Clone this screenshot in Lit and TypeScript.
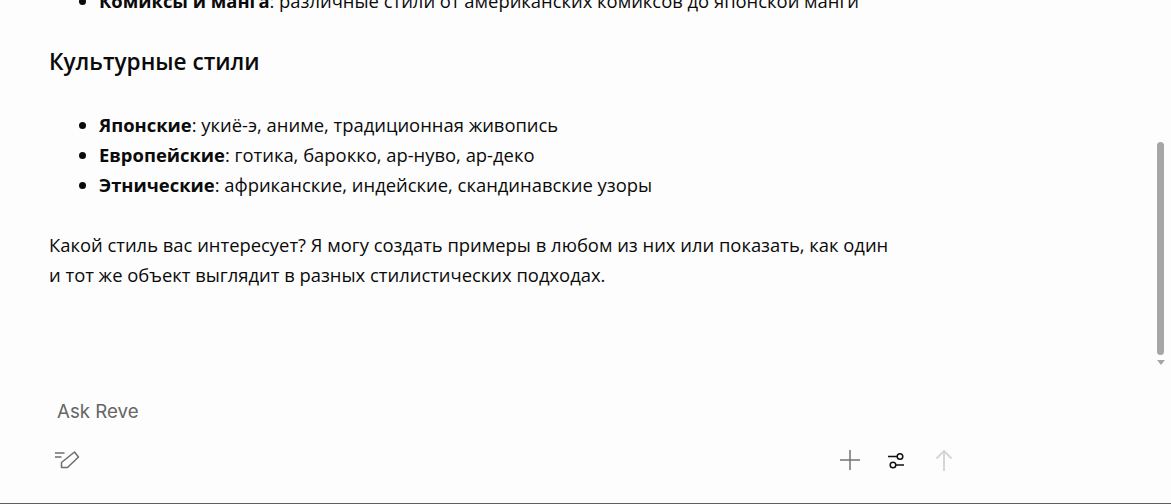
import { LitElement, html, css } from "lit";
import { customElement } from "lit/decorators.js";

@customElement("app-root")
export class AppRoot extends LitElement {
  static styles = css`
    :host {
      display: flex;
      flex-direction: column;
      width: 1171px;
      height: 504px;
      background: #fdfdfd;
      color: #0a0a0a;
      font-family: "Open Sans", "Noto Sans", sans-serif;
      overflow: hidden;
      box-sizing: border-box;
      border-bottom: 1px solid #5f5f5f;
    }
    .main {
      position: relative;
      height: 382px;
      overflow: hidden;
      flex: none;
    }
    .content {
      width: 843px;
      margin: -14px 0 0 49px;
      font-size: 18.4px;
      line-height: 30px;
    }
    ul {
      margin: 0;
      padding: 0 0 0 50px;
    }
    h3 {
      margin: 31px 0 33px;
      font-size: 22.6px;
      line-height: 30px;
      font-weight: 550;
    }
    p {
      margin: 30px 0 0;
    }
    b {
      font-weight: 700;
    }
    .track {
      position: absolute;
      right: 7px;
      top: 142px;
      width: 7px;
      height: 213px;
      border-radius: 4px;
      background: #a6a6a6;
    }
    .arrow {
      position: absolute;
      right: 6px;
      top: 360px;
      width: 0;
      height: 0;
      border-left: 4.5px solid transparent;
      border-right: 4.5px solid transparent;
      border-top: 5px solid #a6a6a6;
    }
    .composer {
      flex: 1;
      width: 955px;
      padding: 18px 0 0 57px;
      box-sizing: border-box;
      display: flex;
      flex-direction: column;
    }
    .ask {
      font-family: Inter, sans-serif;
      font-size: 18.7px;
      font-weight: 400;
      line-height: 23px;
      color: #666;
    }
    .tools {
      display: flex;
      align-items: center;
      margin: 26px 0 0 -2px;
    }
    .tools svg {
      display: block;
      flex: none;
    }
    .spacer {
      flex: 1;
    }
    .right {
      display: flex;
      gap: 24px;
      align-items: center;
    }
  `;

  render() {
    return html`
      <div class="main">
        <div class="content">
          <ul>
            <li><b>Комиксы и манга</b>: различные стили от американских комиксов до японской манги</li>
          </ul>
          <h3>Культурные стили</h3>
          <ul>
            <li><b>Японские</b>: укиё-э, аниме, традиционная живопись</li>
            <li><b>Европейские</b>: готика, барокко, ар-нуво, ар-деко</li>
            <li><b>Этнические</b>: африканские, индейские, скандинавские узоры</li>
          </ul>
          <p>Какой стиль вас интересует? Я могу создать примеры в любом из них или показать, как один и тот же объект выглядит в разных стилистических подходах.</p>
        </div>
        <div class="track"></div>
        <div class="arrow"></div>
      </div>
      <div class="composer">
        <div class="ask">Ask Reve</div>
        <div class="tools">
          <svg width="26" height="22" viewBox="0 0 26 22" fill="none" stroke="#6e6e6e" stroke-width="1.5">
            <path d="M0 4H9.5M0 8H6.5" />
            <path d="M6.5 18.5V13.5L19.5 3L23.5 8L12.5 18.5Z" stroke-linejoin="round" />
          </svg>
          <div class="spacer"></div>
          <div class="right">
            <svg width="22" height="22" viewBox="0 0 22 22" fill="none" stroke="#737373" stroke-width="1.5">
              <path d="M11 1V21M1 11H21" />
            </svg>
            <svg width="24" height="22" viewBox="0 0 24 22" fill="none" stroke="#111" stroke-width="1.5">
              <path d="M3 7.5H12M11 16H19" />
              <circle cx="15" cy="7.5" r="2.8" fill="#fdfdfd" />
              <circle cx="8" cy="16" r="2.8" fill="#fdfdfd" />
            </svg>
            <svg width="22" height="22" viewBox="0 0 22 22" fill="none" stroke="#d6d6d6" stroke-width="2">
              <path d="M11 22V2M3.5 9.5L11 2L18.5 9.5" />
            </svg>
          </div>
        </div>
      </div>
    `;
  }
}
